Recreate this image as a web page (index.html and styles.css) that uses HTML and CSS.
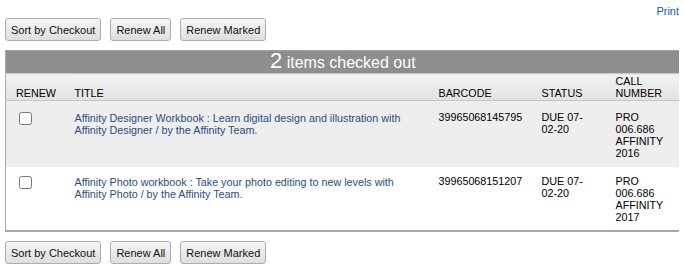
FILE: index.html
```html
<!DOCTYPE html>
<html>
<head>
<meta charset="utf-8">
<link rel="stylesheet" href="styles.css">
</head>
<body>
<div class="print-row"><a class="print" href="#">Print</a></div>
<div class="actions">
  <button class="btn">Sort by Checkout</button>
  <button class="btn">Renew All</button>
  <button class="btn">Renew Marked</button>
</div>
<table class="items">
  <colgroup>
    <col class="c-renew"><col class="c-title"><col class="c-barcode"><col class="c-status"><col class="c-call">
  </colgroup>
  <thead>
    <tr class="caption-row"><th colspan="5" class="caption"><span class="count">2</span> items checked out</th></tr>
    <tr class="head-row">
      <th class="h-renew">RENEW</th>
      <th>TITLE</th>
      <th>BARCODE</th>
      <th>STATUS</th>
      <th>CALL<br>NUMBER</th>
    </tr>
  </thead>
  <tbody>
    <tr class="odd">
      <td class="cb"><input type="checkbox"></td>
      <td class="title"><a href="#">Affinity Designer Workbook : Learn digital design and illustration with Affinity Designer / by the Affinity Team.</a></td>
      <td>39965068145795</td>
      <td>DUE 07-<br>02-20</td>
      <td>PRO<br>006.686<br>AFFINITY<br>2016</td>
    </tr>
    <tr class="even">
      <td class="cb"><input type="checkbox"></td>
      <td class="title"><a href="#">Affinity Photo workbook : Take your photo editing to new levels with Affinity Photo / by the Affinity Team.</a></td>
      <td>39965068151207</td>
      <td>DUE 07-<br>02-20</td>
      <td>PRO<br>006.686<br>AFFINITY<br>2017</td>
    </tr>
  </tbody>
</table>
<div class="actions bottom">
  <button class="btn">Sort by Checkout</button>
  <button class="btn">Renew All</button>
  <button class="btn">Renew Marked</button>
</div>
</body>
</html>
```
FILE: styles.css
```css
body {
  margin: 0 5px;
  font-family: "Liberation Sans", Arial, sans-serif;
  font-size: 11px;
  color: #000;
  background: #fff;
}
.print-row {
  display: flex;
  justify-content: flex-end;
  height: 18px;
  padding-top: 5px;
  box-sizing: border-box;
}
.print {
  color: #2458a6;
  text-decoration: none;
  font-size: 11px;
  line-height: 13px;
}
.actions {
  display: flex;
  gap: 9px;
  height: 23px;
  margin-bottom: 9px;
}
.actions.bottom {
  margin-top: 9px;
}
.btn {
  font-family: "Liberation Sans", Arial, sans-serif;
  font-size: 11px;
  color: #111;
  height: 23px;
  padding: 0 5px;
  border: 1px solid #adadad;
  border-radius: 3px;
  background: linear-gradient(#f6f6f6, #dedede);
}
.items {
  width: 674px;
  border-collapse: collapse;
  table-layout: fixed;
  border-left: 1px solid #a9a9a9;
  border-bottom: 2px solid #a9a9a9;
}
.c-renew { width: 63px; }
.c-title { width: 364px; }
.c-barcode { width: 103px; }
.c-status { width: 74px; }
.c-call { width: 70px; }
.caption {
  background: #8e8e8e;
  color: #fff;
  font-weight: normal;
  font-size: 16px;
  height: 21px;
  padding: 0;
  text-align: center;
  line-height: 20px;
  border-top: 1px solid #a0a0a0;
  border-bottom: 1px solid #c8c8c8;
}
.count {
  font-size: 22px;
}
.head-row th {
  background: linear-gradient(#f2f2f2, #e2e2e2);
  font-weight: normal;
  text-align: left;
  vertical-align: bottom;
  padding: 1px 6px 1px 6px;
  line-height: 12px;
  font-size: 10.75px;
  border-bottom: 1px solid #c6c6c6;
}
.head-row th.h-renew { padding-left: 10px; }
tbody td {
  vertical-align: top;
  padding: 10px 6px 8px 6px;
  line-height: 12px;
  font-size: 10.75px;
}
tbody tr.odd td { background: #eeeeee; }
tbody tr.even td { background: #fff; padding-top: 8px; padding-bottom: 7px; }
td.cb { padding-left: 13px; }
td.cb input { margin: 1px 0 0 0; width: 13px; height: 13px; }
td.title a { color: #2a4d84; text-decoration: none; }
tr.odd td.title { padding-top: 11px; }
tr.even td.title { padding-top: 9px; }
```
